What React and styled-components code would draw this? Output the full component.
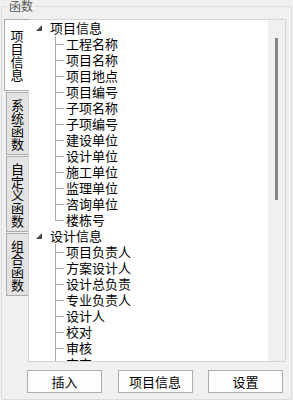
import React from 'react';
import styled, { createGlobalStyle } from 'styled-components';

const GlobalStyle = createGlobalStyle`
  html, body {
    margin: 0;
    padding: 0;
    background: #f0f0f0;
  }
  body {
    width: 293px;
    height: 400px;
    overflow: hidden;
    font-family: "Noto Sans CJK SC", "Noto Sans", sans-serif;
    color: #000;
  }
`;

const tabs = [
  { label: '项目信息', active: true },
  { label: '系统函数' },
  { label: '自定义函数' },
  { label: '组合函数' },
];

const treeData = [
  {
    title: '项目信息',
    items: ['工程名称', '项目名称', '项目地点', '项目编号', '子项名称', '子项编号', '建设单位', '设计单位', '施工单位', '监理单位', '咨询单位', '楼栋号'],
    closed: true,
  },
  {
    title: '设计信息',
    items: ['项目负责人', '方案设计人', '设计总负责', '专业负责人', '设计人', '校对', '审核', '审定', '批准', '日期'],
  },
];

const App = () => {
  return (
    <>
      <GlobalStyle />
      <GroupBox>
        <Caption>函数</Caption>
        <TabControl>
          <TabStrip>
            {tabs.map((t) => (
              <Tab key={t.label} $active={t.active}>
                {t.label.split('').map((ch, i) => (
                  <TabChar key={i}>{ch}</TabChar>
                ))}
              </Tab>
            ))}
          </TabStrip>
          <Page>
            <TreeList>
              {treeData.map((group) => (
                <React.Fragment key={group.title}>
                  <ParentRow>
                    <Caret viewBox="0 0 6 6">
                      <polygon points="6,0 6,6 0,6" fill="#4a4a4a" />
                    </Caret>
                    <Label>{group.title}</Label>
                  </ParentRow>
                  {group.items.map((item, i) => (
                    <ChildRow key={item}>
                      <Branch $last={group.closed && i === group.items.length - 1} />
                      <Label>{item}</Label>
                    </ChildRow>
                  ))}
                </React.Fragment>
              ))}
            </TreeList>
            <ScrollTrack>
              <ScrollThumb />
            </ScrollTrack>
          </Page>
        </TabControl>
        <ButtonRow>
          <Button>插入</Button>
          <Button>项目信息</Button>
          <Button>设置</Button>
        </ButtonRow>
      </GroupBox>
    </>
  );
};

export default App;

const GroupBox = styled.fieldset`
  box-sizing: border-box;
  margin: 0 0 0 1px;
  width: 291px;
  height: 400px;
  min-width: 0;
  padding: 7px 5px 0 2px;
  border: 1px solid #dcdcdc;
  border-radius: 2px;
`;

const Caption = styled.legend`
  margin-left: 3px;
  padding: 0 2px;
  font-size: 12px;
  line-height: 12px;
  color: #555;
`;

const TabControl = styled.div`
  display: flex;
  height: 343px;
`;

const TabStrip = styled.div`
  width: 24px;
  display: flex;
  flex-direction: column;
  align-items: flex-end;
  position: relative;
  z-index: 1;
`;

const Tab = styled.div`
  box-sizing: border-box;
  display: flex;
  flex-direction: column;
  align-items: center;
  width: ${(p) => (p.$active ? '25px' : '22px')};
  margin-right: ${(p) => (p.$active ? '-1px' : '0')};
  margin-top: ${(p) => (p.$active ? '0' : '1px')};
  padding: ${(p) => (p.$active ? '9px 0' : '5px 0 4px')};
  background: ${(p) => (p.$active ? '#fff' : '#e3e3e3')};
  border: 1px solid #adadad;
  border-right: none;
`;

const TabChar = styled.span`
  font-size: 13px;
  line-height: 13px;
  height: 13px;
`;

const Page = styled.div`
  box-sizing: border-box;
  flex: 1;
  display: flex;
  background: #fff;
  border: 1px solid #d4d4d4;
  overflow: hidden;
`;

const TreeList = styled.div`
  flex: 1;
  overflow: hidden;
`;

const ParentRow = styled.div`
  display: flex;
  align-items: center;
  height: 16px;
  padding-left: 7px;
`;

const Caret = styled.svg`
  width: 6px;
  height: 6px;
  margin-right: 8px;
  flex: none;
`;

const ChildRow = styled.div`
  display: flex;
  align-items: center;
  height: 16px;
`;

const Branch = styled.span`
  position: relative;
  flex: none;
  width: 11px;
  height: 16px;
  margin-left: 26px;

  &::before {
    content: '';
    position: absolute;
    left: 0;
    top: 0;
    width: 1px;
    height: ${(p) => (p.$last ? '9px' : '16px')};
    background: #a8a8a8;
  }

  &::after {
    content: '';
    position: absolute;
    left: 0;
    top: 8px;
    width: 9px;
    height: 1px;
    background: #a8a8a8;
  }
`;

const Label = styled.span`
  font-size: 13px;
  line-height: 16px;
  white-space: nowrap;
`;

const ScrollTrack = styled.div`
  width: 17px;
  flex: none;
  background: #f0f0f0;
  display: flex;
  justify-content: center;
`;

const ScrollThumb = styled.div`
  width: 3px;
  height: 162px;
  margin-top: 18px;
  background: #858585;
`;

const ButtonRow = styled.div`
  display: flex;
  justify-content: space-between;
  margin: 8px 3px 0 23px;
`;

const Button = styled.button`
  box-sizing: border-box;
  width: 75px;
  height: 23px;
  padding: 0;
  background: #fdfdfd;
  border: 1px solid #adadad;
  border-radius: 0;
  font-family: "Noto Sans CJK SC", "Noto Sans", sans-serif;
  font-size: 13px;
  line-height: 21px;
  color: #000;
`;
